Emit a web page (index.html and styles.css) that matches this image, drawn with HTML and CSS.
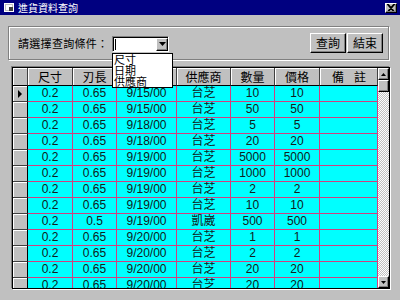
FILE: index.html
```html
<!DOCTYPE html>
<html>
<head>
    <title>進貨資料查詢</title>
    <link rel="stylesheet" href="styles.css">
</head>
<body>
    <div class="titlebar">
        <svg class="app-icon" width="10" height="9" viewBox="0 0 10 9">
            <rect x="0.5" y="0.5" width="9" height="8" fill="#c0c0c0" stroke="#fff"/>
            <rect x="2" y="2" width="6" height="5" fill="#fff"/>
            <rect x="5" y="4" width="4" height="4" fill="#404040"/>
        </svg>
        <span class="title">進貨資料查詢</span>
        <span class="close raised">
            <svg width="8" height="7" viewBox="0 0 8 7">
                <path d="M1 0 L7 7 M0 0 L6 7 M7 0 L1 7 M8 0 L2 7" stroke="#000" stroke-width="1.1"/>
            </svg>
        </span>
    </div>

    <div class="frame">
        <span class="prompt">請選擇查詢條件：</span>
        <div class="combo">
            <span class="caret"></span>
            <span class="combo-btn raised">
                <svg width="7" height="4" viewBox="0 0 7 4"><path d="M0 0 H7 L3.5 4 Z" fill="#000"/></svg>
            </span>
            <ul class="droplist">
                <li>尺寸</li>
                <li>日期</li>
                <li>供應商</li>
            </ul>
        </div>
        <div class="buttons">
            <button class="raised">查詢</button>
            <button class="raised">結束</button>
        </div>
    </div>

    <div class="grid">
        <div class="rows">
            <div class="row head">
                <span class="sel"></span><span>尺寸</span><span>刃長</span><span>日期</span><span>供應商</span><span>數量</span><span>價格</span><span class="memo">備　註</span>
            </div>
            <div class="row current"><span class="sel"><i class="marker"></i></span><span>0.2</span><span>0.65</span><span>9/15/00</span><span>台芝</span><span>10</span><span>10</span><span></span></div>
            <div class="row"><span class="sel"></span><span>0.2</span><span>0.65</span><span>9/15/00</span><span>台芝</span><span>50</span><span>50</span><span></span></div>
            <div class="row"><span class="sel"></span><span>0.2</span><span>0.65</span><span>9/18/00</span><span>台芝</span><span>5</span><span>5</span><span></span></div>
            <div class="row"><span class="sel"></span><span>0.2</span><span>0.65</span><span>9/18/00</span><span>台芝</span><span>20</span><span>20</span><span></span></div>
            <div class="row"><span class="sel"></span><span>0.2</span><span>0.65</span><span>9/19/00</span><span>台芝</span><span>5000</span><span>5000</span><span></span></div>
            <div class="row"><span class="sel"></span><span>0.2</span><span>0.65</span><span>9/19/00</span><span>台芝</span><span>1000</span><span>1000</span><span></span></div>
            <div class="row"><span class="sel"></span><span>0.2</span><span>0.65</span><span>9/19/00</span><span>台芝</span><span>2</span><span>2</span><span></span></div>
            <div class="row"><span class="sel"></span><span>0.2</span><span>0.65</span><span>9/19/00</span><span>台芝</span><span>10</span><span>10</span><span></span></div>
            <div class="row"><span class="sel"></span><span>0.2</span><span>0.5</span><span>9/19/00</span><span>凱崴</span><span>500</span><span>500</span><span></span></div>
            <div class="row"><span class="sel"></span><span>0.2</span><span>0.65</span><span>9/20/00</span><span>台芝</span><span>1</span><span>1</span><span></span></div>
            <div class="row"><span class="sel"></span><span>0.2</span><span>0.65</span><span>9/20/00</span><span>台芝</span><span>2</span><span>2</span><span></span></div>
            <div class="row"><span class="sel"></span><span>0.2</span><span>0.65</span><span>9/20/00</span><span>台芝</span><span>20</span><span>20</span><span></span></div>
            <div class="row"><span class="sel"></span><span>0.2</span><span>0.65</span><span>9/20/00</span><span>台芝</span><span>20</span><span>20</span><span></span></div>
        </div>
        <div class="scrollbar">
            <span class="arrow raised"><svg width="5" height="3" viewBox="0 0 5 3"><path d="M0 3 H5 L2.5 0 Z" fill="#000"/></svg></span>
            <span class="thumb raised"></span>
            <span class="track"></span>
            <span class="arrow raised"><svg width="5" height="3" viewBox="0 0 5 3"><path d="M0 0 H5 L2.5 3 Z" fill="#000"/></svg></span>
        </div>
    </div>
</body>
</html>
```

FILE: styles.css
```css
body { margin: 0; background: #c0c0c0; font-family: "Liberation Sans", "Noto Sans CJK TC", sans-serif; font-size: 12px; color: #000; height: 300px; overflow: hidden; }
.raised { background: #c0c0c0; border: 1px solid; border-color: #fff #000 #000 #fff; box-shadow: inset -1px -1px #808080; box-sizing: border-box; }

.titlebar { height: 15px; background: #000080; display: flex; align-items: center; padding: 0 3px 0 4px; }
.app-icon { display: block; }
.title { color: #fff; font-size: 10px; line-height: 15px; margin-left: 4px; font-family: "Noto Sans CJK TC", sans-serif; }
.close { margin-left: auto; width: 12px; height: 10px; display: flex; align-items: center; justify-content: center; }
.close svg { display: block; }

.frame { margin: 11px 0 0 8px; width: 381px; height: 34px; box-sizing: border-box; border: 1px solid #808080; box-shadow: 1px 1px 0 #fff, inset 1px 1px 0 #fff; display: flex; align-items: center; padding: 0 5px 0 9px; }
.prompt { font-family: "Noto Sans CJK TC", sans-serif; font-size: 11px; letter-spacing: 0.3px; line-height: 14px; width: 94px; }
.combo { position: relative; width: 57px; height: 16px; box-sizing: border-box; background: #fff; border: 1px solid; border-color: #808080 #fff #fff #808080; box-shadow: inset 1px 1px #000; margin-top: 1px; }
.caret { position: absolute; left: 2px; top: 2px; width: 1px; height: 11px; background: #000; }
.combo-btn { position: absolute; right: 0; top: 1px; width: 12px; height: 13px; display: flex; align-items: center; justify-content: center; }
.combo-btn svg { display: block; }
.droplist { position: absolute; left: -1px; top: 16px; width: 61px; height: 35px; box-sizing: border-box; margin: 0; padding: 0 0 0 1px; list-style: none; background: #fff; border: 1px solid #000; z-index: 2; font-family: "Noto Sans CJK TC", sans-serif; font-size: 11px; line-height: 11px; }
.buttons { margin-left: auto; display: flex; gap: 1px; }
.buttons button { width: 36px; height: 20px; padding: 0; font-family: "Noto Sans CJK TC", sans-serif; font-size: 12px; line-height: 14px; color: #000; }

.grid { margin: 7px 0 0 12px; width: 378px; height: 222px; box-sizing: border-box; border: 1px solid #000; box-shadow: -1px -1px 0 #808080, 1px 1px 0 #fff; display: flex; overflow: hidden; }
.rows { width: 365px; }
.row { display: grid; grid-template-columns: 15px 45px 44px 60px 54px 44px 45px 58px; height: 16px; }
.row span { box-sizing: border-box; background: #00ffff; border-right: 1px solid #d04080; border-bottom: 1px solid #d04080; text-align: center; line-height: 15px; white-space: nowrap; overflow: hidden; color: #102020; }
.row .sel { background: #c0c0c0; border-right-color: #000; border-bottom-color: #404040; box-shadow: inset 1px 1px #fff; position: relative; }
.row.head { height: 18px; }
.row.head span { background: #c0c0c0; border-right-color: #404040; border-bottom-color: #000; box-shadow: inset 1px 1px #fff; line-height: 17px; font-family: "Noto Sans CJK TC", sans-serif; color: #000; }
.row.head .memo { letter-spacing: -1px; }
.marker { position: absolute; left: 5px; top: 4px; width: 0; height: 0; border-top: 4px solid transparent; border-bottom: 4px solid transparent; border-left: 4px solid #000; }

.scrollbar { width: 11px; display: flex; flex-direction: column; }
.scrollbar .arrow, .scrollbar .thumb { height: 12px; display: flex; align-items: center; justify-content: center; flex: none; }
.scrollbar svg { display: block; }
.track { flex: 1; background: repeating-conic-gradient(#c0c0c0 0 25%, #fff 0 50%) 0 0 / 2px 2px; }
```
